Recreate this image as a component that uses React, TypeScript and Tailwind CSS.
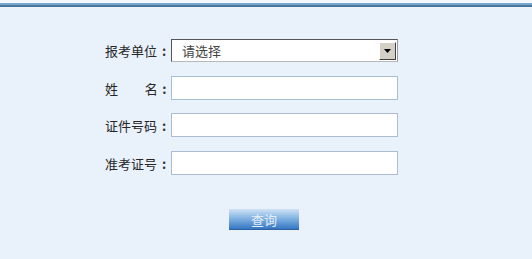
import React from 'react';

const fieldLabel = 'w-[66px] shrink-0 flex items-center text-[13px] text-[#262626] leading-none';

const Colon: React.FC = () => (
  <span className="w-[14px] text-center font-bold text-[#333]">:</span>
);

const App: React.FC = () => {
  return (
    <div
      className="w-[532px] h-[259px] bg-[#e9f1fb] overflow-hidden"
      style={{ fontFamily: '"Noto Sans CJK SC", "Liberation Sans", sans-serif' }}
    >
      <div className="h-[3px] bg-[#f4f8fc]" />
      <div className="h-[2px] bg-[#7aa8cf]" />
      <div className="h-[2px] bg-[#4a7799]" />

      <div className="ml-[105px] pt-[32px] flex flex-col">
        {/* unit select */}
        <div className="flex items-center h-[23px]">
          <span className={fieldLabel}>
            <span className="w-[52px]">报考单位</span>
            <Colon />
          </span>
          <div className="w-[227px] h-[23px] bg-white border border-t-[#555] border-l-[#555] border-r-[#9a9a9a] border-b-[#b8b8b8] flex items-center">
            <span className="flex-1 pl-[10px] text-[13px] text-[#444] leading-none">请选择</span>
            <div className="w-[17px] h-[18px] mr-[1px] bg-[#d4d0c8] border border-t-white border-l-white border-r-[#404040] border-b-[#404040] flex items-center justify-center">
              <svg width="7" height="4" viewBox="0 0 7 4">
                <path d="M0 0 H7 L3.5 4 Z" fill="#000" />
              </svg>
            </div>
          </div>
        </div>

        {/* name */}
        <div className="flex items-center h-[24px] mt-[14px]">
          <span className={fieldLabel}>
            <span className="w-[42px]">姓</span>
            <span>名</span>
            <Colon />
          </span>
          <input className="w-[227px] h-[24px] bg-white border border-[#a9bdd3] outline-none" />
        </div>

        {/* id number */}
        <div className="flex items-center h-[24px] mt-[13px]">
          <span className={fieldLabel}>
            <span className="w-[52px]">证件号码</span>
            <Colon />
          </span>
          <input className="w-[227px] h-[24px] bg-white border border-[#a9bdd3] outline-none" />
        </div>

        {/* admission ticket */}
        <div className="flex items-center h-[24px] mt-[14px]">
          <span className={fieldLabel}>
            <span className="w-[52px]">准考证号</span>
            <Colon />
          </span>
          <input className="w-[227px] h-[24px] bg-white border border-[#a9bdd3] outline-none" />
        </div>

        <button className="ml-[124px] mt-[34px] w-[70px] h-[21px] bg-gradient-to-b from-[#cfe2f5] via-[#7db0e1] to-[#3576c2] border-b border-[#2d62a3] text-[13px] leading-none text-[#e4eefa]">
          查询
        </button>
      </div>
    </div>
  );
};

export default App;
